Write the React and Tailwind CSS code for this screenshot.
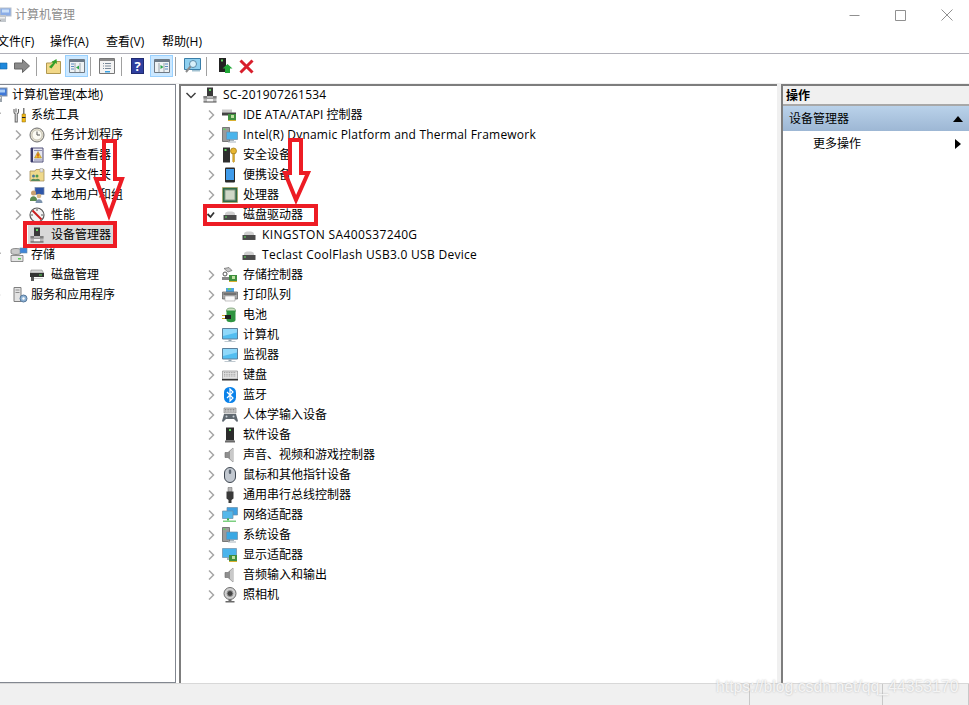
import React from "react";

const Svg = ({ w = 16, h = 16, vb, children }) => (
  <svg width={w} height={h} viewBox={vb || `0 0 ${w} ${h}`} className="shrink-0 block">{children}</svg>
);

const Tower = () => (
  <Svg>
    <path d="M5 0.500h6v8.500H5z" fill="#3a3a3a" />
    <rect x="7" y="2" width="2" height="2" fill="#5fd35f" />
    <path d="M1.500 9h13v6h-13z" fill="#b8b8b8" />
    <path d="M1.500 9H5v3h6V9h3.500v2.500h-13z" fill="#7f7f7f" />
    <path d="M5 12h6v3H5z" fill="#f4f4f4" />
    <path d="M1.500 14.500h13v1h-13z" fill="#4a4a4a" />
  </Svg>
);

const Disk = () => (
  <Svg>
    <path d="M3 6.500C3.500 5 5 4.500 8 4.500s4.500.5 5 2V8H3z" fill="#cfcfcf" />
    <path d="M1.500 8h13v4h-13z" fill="#4a4a4a" />
    <rect x="3" y="9.500" width="2" height="1" fill="#5fe05f" />
    <path d="M1.500 12h13v.8h-13z" fill="#222" />
  </Svg>
);

const Screen = () => (
  <Svg>
    <path d="M0.500 1.500h15v10.500H.5z" fill="#52bdf0" stroke="#5b7f9b" />
    <path d="M1 2h14v3.500L1 9z" fill="#8fd8fa" />
    <path d="M6.500 12.500h3v1.500h-3z" fill="#8fa0ac" />
    <path d="M2.500 14h11v1h-11z" fill="#bfc9d0" />
  </Svg>
);

const Speaker = () => (
  <Svg>
    <path d="M3 5.500h3L11 1v14L6 10.500H3z" fill="#8f8f8f" stroke="#686868" strokeWidth=".6" />
    <path d="M8 4l3-3v14l-3-3z" fill="#c9c9c9" />
  </Svg>
);

const Board = ({ x = 8, y = 9 }) => (
  <g>
    <rect x={x} y={y} width="8" height="6" fill="#3f8f3f" />
    <rect x={x + 3} y={y + 1} width="3" height="3" fill="#bde0a0" />
    <path d={`M${x} ${y + 6}h8v1h-8z`} fill="#d8b030" />
  </g>
);

const icons = {
  rootMgmt: (
    <Svg>
      <rect x="3" y="1" width="11" height="8" fill="#3f78d8" stroke="#8a97a8" />
      <rect x="5" y="2.500" width="7" height="3" fill="#a9cdf5" />
      <path d="M1 8h8v7H1z" fill="#9aa3ab" />
      <path d="M2 10h6v1.500H2z" fill="#e7e7e7" />
      <path d="M2 13h2v1H2z" fill="#4a4a4a" />
    </Svg>
  ),
  tools: (
    <Svg>
      <path d="M4 1.500v4M2 2v3a2 2 0 0 0 1.200 1.800V15h2V6.800A2 2 0 0 0 6.500 5V2" fill="none" stroke="#666" strokeWidth="1.100" />
      <path d="M11 1h1.500v6H11z" fill="#7a7a7a" />
      <path d="M10 7h3.500v8H10z" fill="#f0b814" stroke="#8a6a10" strokeWidth=".5" />
      <path d="M10 10h3.500v1H10z" fill="#222" />
    </Svg>
  ),
  clock: (
    <Svg>
      <circle cx="8" cy="8" r="7" fill="#e3dfd0" stroke="#6e6e6e" />
      <circle cx="8" cy="8" r="5" fill="#fbfaf2" stroke="#b0ab98" strokeWidth=".6" />
      <path d="M8 4.500V8h3" fill="none" stroke="#555" strokeWidth="1" />
    </Svg>
  ),
  event: (
    <Svg>
      <path d="M2 1h12v14H2z" fill="#e6e6ef" stroke="#50507a" />
      <path d="M2 1h2v14H2z" fill="#3a3a6a" />
      <path d="M5 3h8v1H5zM5 12.500h8v1H5z" fill="#8a8ab0" />
      <path d="M9 4.500l3.500 6.500h-7z" fill="#f4c430" stroke="#9a7a10" strokeWidth=".5" />
      <path d="M8.500 6.500h1v2.500h-1zM8.500 9.500h1v1h-1z" fill="#b01818" />
    </Svg>
  ),
  shared: (
    <Svg>
      <path d="M1 4h5l1-1.500h8V14H1z" fill="#efd98c" stroke="#a8935a" strokeWidth=".8" />
      <path d="M11 1.500h3V5h-3z" fill="#e5e5e5" stroke="#999" strokeWidth=".5" />
      <circle cx="4.500" cy="9" r="1.500" fill="#4a7a9a" />
      <circle cx="8" cy="9" r="1.500" fill="#4e9a4e" />
      <path d="M2 14c0-3 5-3 5 0zM6 14c0-3 5-3 5 0z" fill="#5a8a5a" />
    </Svg>
  ),
  users: (
    <Svg>
      <rect x="6" y="0.500" width="9" height="7" fill="#2f56a8" stroke="#7a8aa8" strokeWidth=".7" />
      <circle cx="4.500" cy="6" r="2.500" fill="#c9a070" />
      <path d="M1 13c0-5 7-5 7 0v1H1z" fill="#5c8a50" />
      <circle cx="10" cy="9" r="2.300" fill="#d8b88a" />
      <path d="M6.500 16c0-5 7-5 7 0z" fill="#7c93ad" />
    </Svg>
  ),
  perf: (
    <Svg>
      <circle cx="8" cy="8" r="7" fill="#f4f4f4" stroke="#5a5a5a" strokeWidth="1.200" />
      <path d="M3.500 3.500l9 9" stroke="#c81e1e" strokeWidth="2" />
      <path d="M8 2v2M2 8h2M12 8h2" stroke="#333" strokeWidth=".8" />
    </Svg>
  ),
  tower: <Tower />,
  storage: (
    <Svg w={18} h={16}>
      <path d="M1 3c0-2 10-2 10 0v3c0 2-10 2-10 0z" fill="#c9c9c9" stroke="#666" strokeWidth=".7" />
      <path d="M1 8.500h12v6H1z" fill="#e4e4e4" stroke="#666" strokeWidth=".7" />
      <rect x="8" y="11" width="3" height="1.500" fill="#55d055" />
      <rect x="10" y="1" width="7" height="5" fill="#3f86d8" stroke="#6a8aa8" strokeWidth=".6" />
    </Svg>
  ),
  diskMgmt: (
    <Svg>
      <path d="M2 3h11l1.500 3h-13z" fill="#d5d5d5" stroke="#777" strokeWidth=".5" />
      <path d="M1 6h14v4H1z" fill="#333" />
      <rect x="10" y="7.500" width="3" height="1" fill="#5fe05f" />
      <path d="M2 10h3v4H2z" fill="#555" />
      <path d="M5 11h9v1H5z" fill="#cfcfcf" />
    </Svg>
  ),
  services: (
    <Svg>
      <path d="M2 0.500h7v14H2z" fill="#e3e3e3" stroke="#7f7f7f" />
      <path d="M3.500 2.500h4v1h-4zM3.500 5h4v1h-4z" fill="#8d8d8d" />
      <circle cx="11.500" cy="11.500" r="3.500" fill="#8eb2d4" stroke="#55779a" />
      <circle cx="11.500" cy="11.500" r="1.200" fill="#fff" />
    </Svg>
  ),
  ide: (
    <Svg>
      <path d="M0 2.500h10v3H0z" fill="#c9c9c9" />
      <path d="M0 5.500h14v3H0z" fill="#444" />
      <Board x={6} y={7} />
    </Svg>
  ),
  sys: (
    <Svg>
      <path d="M0.500 0.500h7v14h-7z" fill="#9a9a9a" stroke="#555" strokeWidth=".7" />
      <rect x="1.500" y="1.500" width="2" height="1.500" fill="#5fd35f" />
      <path d="M4.500 5h11v7.500h-11z" fill="#4ab4ec" stroke="#6e8ea8" strokeWidth=".7" />
      <path d="M8 13h4v1H8zM6 14.500h8v1H6z" fill="#a8b4bc" />
    </Svg>
  ),
  security: (
    <Svg>
      <path d="M1 0.500h7v15H1z" fill="#2d2d2d" />
      <rect x="2.500" y="2" width="2" height="2" fill="#5fd35f" />
      <circle cx="11.500" cy="4" r="3" fill="#e7b530" stroke="#9a7412" strokeWidth=".7" />
      <path d="M10.700 6.500h1.800v8l-1 1-.8-1z" fill="#e0ad28" stroke="#9a7412" strokeWidth=".4" />
    </Svg>
  ),
  portable: (
    <Svg>
      <rect x="3" y="0.500" width="10" height="15" rx="1" fill="#2a2a2a" />
      <rect x="4" y="2" width="8" height="11" fill="#3f9bea" />
    </Svg>
  ),
  cpu: (
    <Svg>
      <rect x="0.500" y="0.500" width="15" height="15" fill="#2f6a46" stroke="#b8a048" strokeDasharray="1 1" />
      <rect x="3" y="3" width="10" height="10" fill="#cfd8c8" stroke="#8a9a88" />
    </Svg>
  ),
  disk: <Disk />,
  storCtl: (
    <Svg>
      <path d="M2 1.500l5-1 3 3-4 1.500z" fill="#c5c5c5" stroke="#555" strokeWidth=".6" />
      <circle cx="3" cy="7" r="2" fill="none" stroke="#555" />
      <path d="M0 10h8v3H0z" fill="#888" />
      <Board x={7} y={8} />
    </Svg>
  ),
  printer: (
    <Svg>
      <path d="M4 1h8v4H4z" fill="#4da6e0" />
      <path d="M6 1h3v2H6z" fill="#6cc56c" />
      <path d="M0.500 5h15v7h-15z" fill="#a8a8a8" stroke="#555" strokeWidth=".7" />
      <path d="M3 9h10v5H3z" fill="#fafafa" stroke="#888" strokeWidth=".5" />
      <path d="M1.500 6.500h13v1h-13z" fill="#3c3c3c" />
    </Svg>
  ),
  battery: (
    <Svg>
      <ellipse cx="9" cy="3.500" rx="4.500" ry="2.500" fill="#cfe3c4" stroke="#4a7a4a" strokeWidth=".6" />
      <path d="M4.500 3.500h9V13c0 3-9 3-9 0z" fill="#2e9440" />
      <path d="M3 8h6v4H3z" fill="#1f1f1f" />
      <path d="M0 8.500h3M0 11.500h3" stroke="#caa020" strokeWidth="1.200" />
    </Svg>
  ),
  computer: <Screen />,
  monitor: <Screen />,
  keyboard: (
    <Svg>
      <path d="M0.500 4h15v8h-15z" fill="#e2e2e2" stroke="#8c8c8c" strokeWidth=".7" />
      <path d="M2 5.500h12M2 7.300h12M2 9h12" stroke="#a0a0a0" strokeDasharray="1 .7" />
      <path d="M0 12h16v1.500H0z" fill="#333" />
    </Svg>
  ),
  bluetooth: (
    <Svg>
      <rect x="2" y="0" width="12" height="16" rx="5.500" fill="#0a82ea" />
      <path d="M5 5l6 6-3 3V2l3 3-6 6" fill="none" stroke="#fff" strokeWidth="1.200" />
    </Svg>
  ),
  hid: (
    <Svg>
      <path d="M2 1h12v5H2z" fill="#d0d0d0" stroke="#777" strokeWidth=".6" />
      <path d="M3 2.500h10M3 4h10" stroke="#8a8a8a" strokeDasharray="1 .6" />
      <path d="M2 7h12l2 7-1 1-3-3H4l-3 3-1-1z" fill="#5f6870" />
      <circle cx="4.500" cy="9.500" r="1" fill="#c8d0d8" />
      <circle cx="11.500" cy="9.500" r="1" fill="#c8d0d8" />
    </Svg>
  ),
  soft: (
    <Svg>
      <path d="M4 0.500h8v13H4z" fill="#2b2b2b" />
      <rect x="7" y="2" width="2" height="2" fill="#5fd35f" />
      <path d="M3 13.500h10v2H3z" fill="#6a6a6a" />
    </Svg>
  ),
  sound: <Speaker />,
  mouse: (
    <Svg>
      <rect x="2.500" y="0.500" width="11" height="15" rx="5.500" fill="#c2c8d0" stroke="#3e4650" />
      <rect x="6.800" y="2.500" width="2.400" height="4.500" rx="1.200" fill="#5a6470" />
    </Svg>
  ),
  usb: (
    <Svg>
      <path d="M6 0.500h4v4H6z" fill="#b5b5b5" stroke="#666" strokeWidth=".5" />
      <path d="M4.500 4.500h7v7l-2 1.500v3h-3v-3l-2-1.500z" fill="#3a3a3a" />
    </Svg>
  ),
  network: (
    <Svg>
      <path d="M5 0.500h10.500v7.500H5z" fill="#3fa0e0" stroke="#6a8ea8" strokeWidth=".7" />
      <path d="M0.500 4h10.500v7.500H0.500z" fill="#55b8ea" stroke="#6a8ea8" strokeWidth=".7" />
      <path d="M5 11.500h2v2H5z" fill="#35b04a" />
      <path d="M1 13.500h13v1.500H1z" fill="#7ccf80" />
    </Svg>
  ),
  sysDev: (
    <Svg>
      <path d="M0.500 0.500h7v14h-7z" fill="#9a9a9a" stroke="#555" strokeWidth=".7" />
      <rect x="1.500" y="1.500" width="2" height="1.500" fill="#5fd35f" />
      <path d="M4.500 5h11v7.500h-11z" fill="#39a8e4" stroke="#6e8ea8" strokeWidth=".7" />
      <path d="M8 13h4v1H8zM6 14.500h8v1H6z" fill="#a8b4bc" />
    </Svg>
  ),
  displayAd: (
    <Svg>
      <path d="M0.500 1.500h14v9h-14z" fill="#4ab4ec" stroke="#6e8ea8" strokeWidth=".7" />
      <path d="M5 11h4v2H5z" fill="#a8b4bc" />
      <Board x={7} y={8} />
    </Svg>
  ),
  audio: <Speaker />,
  camera: (
    <Svg>
      <circle cx="8" cy="6.500" r="6" fill="#cfcfcf" stroke="#6e6e6e" />
      <circle cx="8" cy="6.500" r="3" fill="#444" stroke="#999" />
      <path d="M6.500 12.500h3V14h-3zM3.500 14h9v1.500h-9z" fill="#6a6a6a" />
    </Svg>
  ),
};

const Chevron = () => (
  <svg width="12" height="12" viewBox="0 0 12 12" className="block">
    <path d="M4 1.500L8.500 6 4 10.500" fill="none" stroke="#a6a6a6" strokeWidth="1.500" />
  </svg>
);
const Open = () => (
  <svg width="12" height="12" viewBox="0 0 12 12" className="block">
    <path d="M2.500 5L5.500 8 9 3.500" fill="none" stroke="#333" strokeWidth="1.800" />
  </svg>
);
const Down = () => (
  <svg width="12" height="12" viewBox="0 0 12 12" className="block">
    <path d="M1.500 4L6 8.500 10.500 4" fill="none" stroke="#404040" strokeWidth="1.500" />
  </svg>
);

function Row({ pad, mark, icon, text, gap = "ml-[5px]", igap = "ml-[5px]", track = "" }) {
  return (
    <div className={`flex h-5 items-center ${pad}`}>
      <span className="flex w-3 h-3 shrink-0 items-center justify-center">
        {mark === "c" && <Chevron />}
        {mark === "o" && <Open />}
        {mark === "d" && <Down />}
      </span>
      <span className={`${igap} flex w-4 h-4 shrink-0 items-center justify-center`}>{icons[icon]}</span>
      <span className={`${gap} ${track} whitespace-nowrap leading-5`}>{text}</span>
    </div>
  );
}

const center = [
  ["ide", "IDE ATA/ATAPI 控制器", ""],
  ["sys", "Intel(R) Dynamic Platform and Thermal Framework", "tracking-[0.21px]"],
  ["security", "安全设备", ""],
  ["portable", "便携设备", ""],
  ["cpu", "处理器", ""],
];
const center2 = [
  ["storCtl", "存储控制器"],
  ["printer", "打印队列"],
  ["battery", "电池"],
  ["computer", "计算机"],
  ["monitor", "监视器"],
  ["keyboard", "键盘"],
  ["bluetooth", "蓝牙"],
  ["hid", "人体学输入设备"],
  ["soft", "软件设备"],
  ["sound", "声音、视频和游戏控制器"],
  ["mouse", "鼠标和其他指针设备"],
  ["usb", "通用串行总线控制器"],
  ["network", "网络适配器"],
  ["sysDev", "系统设备"],
  ["displayAd", "显示适配器"],
  ["audio", "音频输入和输出"],
  ["camera", "照相机"],
];
const left2 = [
  ["clock", "任务计划程序"],
  ["event", "事件查看器"],
  ["shared", "共享文件夹"],
  ["users", "本地用户和组"],
  ["perf", "性能"],
];

const Sep = ({ m }) => <span className={`w-px h-[19px] bg-[#a0a0a0] shrink-0 ${m}`} />;

export default function App() {
  return (
    <div className="relative w-[969px] h-[705px] overflow-hidden bg-white text-[12px] text-black flex flex-col font-['Open_Sans','Noto_Sans_CJK_SC',sans-serif]">
      {/* title bar */}
      <div className="flex h-[29px] items-center shrink-0 pt-[1px]">
        <span className="-ml-[3px] opacity-60">{icons.rootMgmt}</span>
        <span className="ml-[2px] text-[#8c8c8c]">计算机管理</span>
        <div className="ml-auto flex items-center text-[#909090]">
          <svg width="11" height="11" viewBox="0 0 11 11" className="mr-[35px]"><path d="M0.500 5.500h10" stroke="#909090" /></svg>
          <svg width="11" height="11" viewBox="0 0 11 11" className="mr-[35px]"><path d="M0.500 0.500h10v10h-10z" fill="none" stroke="#909090" /></svg>
          <svg width="12" height="12" viewBox="0 0 12 12" className="mr-[16px]"><path d="M0.500 0.500l11 11M11.500 0.500l-11 11" stroke="#909090" /></svg>
        </div>
      </div>
      {/* menu */}
      <div className="flex h-[25px] items-center shrink-0 border-b border-[#b0b0b8] pt-[1px]">
        <span className="w-[50px] -ml-[3px] mr-[3px] whitespace-nowrap">文件(F)</span>
        <span className="w-[56px] whitespace-nowrap">操作(A)</span>
        <span className="w-[56px] whitespace-nowrap">查看(V)</span>
        <span className="whitespace-nowrap">帮助(H)</span>
      </div>
      {/* toolbar */}
      <div className="flex h-[29px] items-start pt-[1px] shrink-0">
        <div className="flex h-[22px] items-center">
          <svg width="8" height="14" viewBox="0 0 8 14" className="shrink-0"><path d="M0 4h7v6H0z" fill="#1e88dc" stroke="#1268aa" strokeWidth=".6" /></svg>
          <svg width="16" height="16" viewBox="0 0 16 16" className="ml-[6px] shrink-0"><path d="M0.500 5h8V1.500L15.500 8l-7 6.500V11h-8z" fill="#8a8a8a" stroke="#666" /></svg>
          <Sep m="ml-[6px]" />
          <svg width="15" height="16" viewBox="0 0 15 16" className="ml-[9px] shrink-0"><path d="M0.500 5h5l1-1.500h8V15.500H.5z" fill="#f2d888" stroke="#b09850" /><path d="M3 9l4-4-1.500-1 5-3 .5 5-1.500-1-4 5.500z" fill="#35a02a" /></svg>
          <div className="ml-[4px] flex h-[22px] w-[23px] shrink-0 items-center justify-center bg-[#cce8ff] border border-[#99d1ff]">
            <svg width="16" height="14" viewBox="0 0 16 14"><path d="M.5.500h15v13H.5z" fill="#eef2f4" stroke="#707a84" /><path d="M1 1h14v2H1z" fill="#6c7a88" /><path d="M6 4v9M11 4v9" stroke="#9aa4ac" /><path d="M10 6.500v4L7 8.500z" fill="#2aa84a" /><path d="M2 5h3M2 7.500h3M2 10h3" stroke="#5a8ac0" /></svg>
          </div>
          <Sep m="ml-[2px]" />
          <svg width="16" height="16" viewBox="0 0 16 16" className="ml-[8px] shrink-0"><path d="M.5.500h15v15H.5z" fill="#f4f4f4" stroke="#777" /><path d="M1 1h14v2H1z" fill="#8a8a8a" /><path d="M4 5.500h1M6 5.500h6M4 8h1M6 8h6M4 10.500h1M6 10.500h6" stroke="#7a8a9a" /><path d="M6 13h5v1.500H6z" fill="#3aa0e0" /></svg>
          <Sep m="ml-[6px]" />
          <div className="ml-[9px] flex h-4 w-[13px] shrink-0 items-center justify-center bg-[#2f3f9f] text-white font-bold text-[13px] leading-none border border-[#1f2a70]">?</div>
          <div className="ml-[6px] flex h-[22px] w-[23px] shrink-0 items-center justify-center bg-[#cce8ff] border border-[#99d1ff]">
            <svg width="16" height="14" viewBox="0 0 16 14"><path d="M.5.500h15v13H.5z" fill="#eef2f4" stroke="#707a84" /><path d="M1 1h14v2H1z" fill="#6c7a88" /><path d="M5 4v9M10 4v9" stroke="#9aa4ac" /><path d="M6.500 6v4L9.500 8z" fill="#2aa84a" /><path d="M11 5h3M11 7.500h3M11 10h3" stroke="#5a8ac0" /></svg>
          </div>
          <Sep m="ml-[2px]" />
          <svg width="17" height="16" viewBox="0 0 17 16" className="ml-[8px] shrink-0"><path d="M.5.500h16v11H.5z" fill="#8fd0f0" stroke="#3a7ea8" /><circle cx="9" cy="6" r="3.500" fill="#d8f0fa" stroke="#5a8aa8" /><path d="M6.500 8.500L2 14" stroke="#8a8a8a" strokeWidth="2" /><path d="M8 12h8v1.500H8z" fill="#a0c0d0" /></svg>
          <Sep m="ml-[5px]" />
          <svg width="15" height="16" viewBox="0 0 15 16" className="ml-[11px] shrink-0"><path d="M1 0h7v14H1z" fill="#222" /><rect x="3" y="1.500" width="2" height="2" fill="#5fd35f" /><path d="M9.500 6l5 4.500H12V15H7v-4.500H4.500z" fill="#22a838" /></svg>
          <svg width="15" height="15" viewBox="0 0 15 15" className="ml-[6px] shrink-0"><path d="M1.500 1.500l12 12M13.500 1.500l-12 12" stroke="#d81e2c" strokeWidth="3" /></svg>
        </div>
      </div>
      {/* panels */}
      <div className="flex flex-1 min-h-0 bg-[#f0f0f0] pt-[1px]">
        {/* left */}
        <div className="w-[176px] shrink-0 bg-white border-r border-b border-t border-[#828790] overflow-hidden">
          <div className="-ml-[24px]">
            <Row pad="pl-[2px]" icon="rootMgmt" text="计算机管理(本地)" igap="ml-[3px]" gap="ml-[3px]" />
            <Row pad="pl-[15px]" mark="o" icon="tools" text="系统工具" igap="ml-[9px]" gap="ml-[3px]" />
            {left2.map(([i, t]) => (
              <Row key={t} pad="pl-[36px]" mark="c" icon={i} text={t} igap="ml-[5px]" gap="ml-[6px]" />
            ))}
            <div className="flex h-5 items-center ml-[52px] w-[85px] bg-[#d9d9d9]">
              <span className="ml-[1px] flex w-4 h-4 shrink-0">{icons.tower}</span>
              <span className="ml-[6px] whitespace-nowrap">设备管理器</span>
            </div>
            <Row pad="pl-[15px]" mark="o" icon="storage" text="存储" igap="ml-[8px]" gap="ml-[4px]" />
            <Row pad="pl-[36px]" icon="diskMgmt" text="磁盘管理" igap="ml-[5px]" gap="ml-[6px]" />
            <Row pad="pl-[15px]" mark="c" icon="services" text="服务和应用程序" igap="ml-[9px]" gap="ml-[3px]" />
          </div>
        </div>
        <div className="w-[3px] shrink-0 bg-white" />
        {/* center */}
        <div className="w-[598px] shrink-0 bg-white border-l-2 border-t-2 border-[#7d7d7d]">
          <div className="-mt-[1px]">
            <Row pad="pl-[4px]" mark="d" icon="tower" text="SC-201907261534" gap="ml-[5px]" track="tracking-[0.2px]" />
            {center.map(([i, t, k]) => (
              <Row key={t} pad="pl-[24px]" mark="c" icon={i} text={t} track={k} />
            ))}
            <Row pad="pl-[24px]" mark="o" icon="disk" text="磁盘驱动器" />
            <Row pad="pl-[43px]" icon="disk" text="KINGSTON SA400S37240G" track="tracking-[0.38px]" />
            <Row pad="pl-[43px]" icon="disk" text="Teclast CoolFlash USB3.0 USB Device" track="tracking-[0.28px]" />
            {center2.map(([i, t]) => (
              <Row key={t} pad="pl-[24px]" mark="c" icon={i} text={t} />
            ))}
          </div>
        </div>
        <div className="w-[4px] shrink-0 bg-[#f0f0f0]" />
        {/* right */}
        <div className="flex-1 bg-white border-l-2 border-t-2 border-[#7d7d7d] flex flex-col">
          <div className="h-[20px] pl-[3px] pt-[1px] flex items-center bg-[#f0f0f0] border-b-2 border-[#a8a8a8] font-semibold">操作</div>
          <div className="h-[25px] flex items-center justify-between pl-[6px] pr-[6px] bg-gradient-to-b from-[#bad2ea] to-[#9db7d4]">
            <span>设备管理器</span>
            <svg width="10" height="6" viewBox="0 0 10 6"><path d="M5 0l5 6H0z" fill="#000" /></svg>
          </div>
          <div className="h-6 pt-[2px] flex items-center justify-between pl-[30px] pr-[8px]">
            <span>更多操作</span>
            <svg width="6" height="10" viewBox="0 0 6 10"><path d="M0 0l6 5-6 5z" fill="#000" /></svg>
          </div>
        </div>
      </div>
      {/* status bar */}
      <div className="h-[22px] shrink-0 bg-[#f0f0f0] border-t border-[#d8d8d8] flex">
        <span className="w-[750px] border-r border-[#c8c8c8]" />
        <span className="w-[133px] border-r border-[#c8c8c8]" />
        <span className="w-[86px] border-r border-[#c8c8c8]" />
      </div>

      {/* annotations drawn on the screenshot */}
      <div className="absolute left-[23px] top-[221px] w-[94px] h-[27px] border-4 border-[#ed1c24]" />
      <div className="absolute left-[203px] top-[204px] w-[115px] h-[22px] border-4 border-[#ed1c24]" />
      <svg width="969" height="705" className="absolute left-0 top-0 pointer-events-none">
        <path d="M104 141h11v38h7l-13 36-13-36h8z" fill="none" stroke="#ed1c24" strokeWidth="4" />
        <path d="M290 140h11v33h7l-12 27-11-27h5z" fill="none" stroke="#ed1c24" strokeWidth="4" />
      </svg>
      <div className="absolute left-[716px] top-[677px] whitespace-nowrap text-[15.8px] leading-5 text-white/80 font-['Liberation_Sans',sans-serif] [text-shadow:0_0_2px_#b0b0b0]">
        https://blog.csdn.net/qq_44353170
      </div>
    </div>
  );
}
